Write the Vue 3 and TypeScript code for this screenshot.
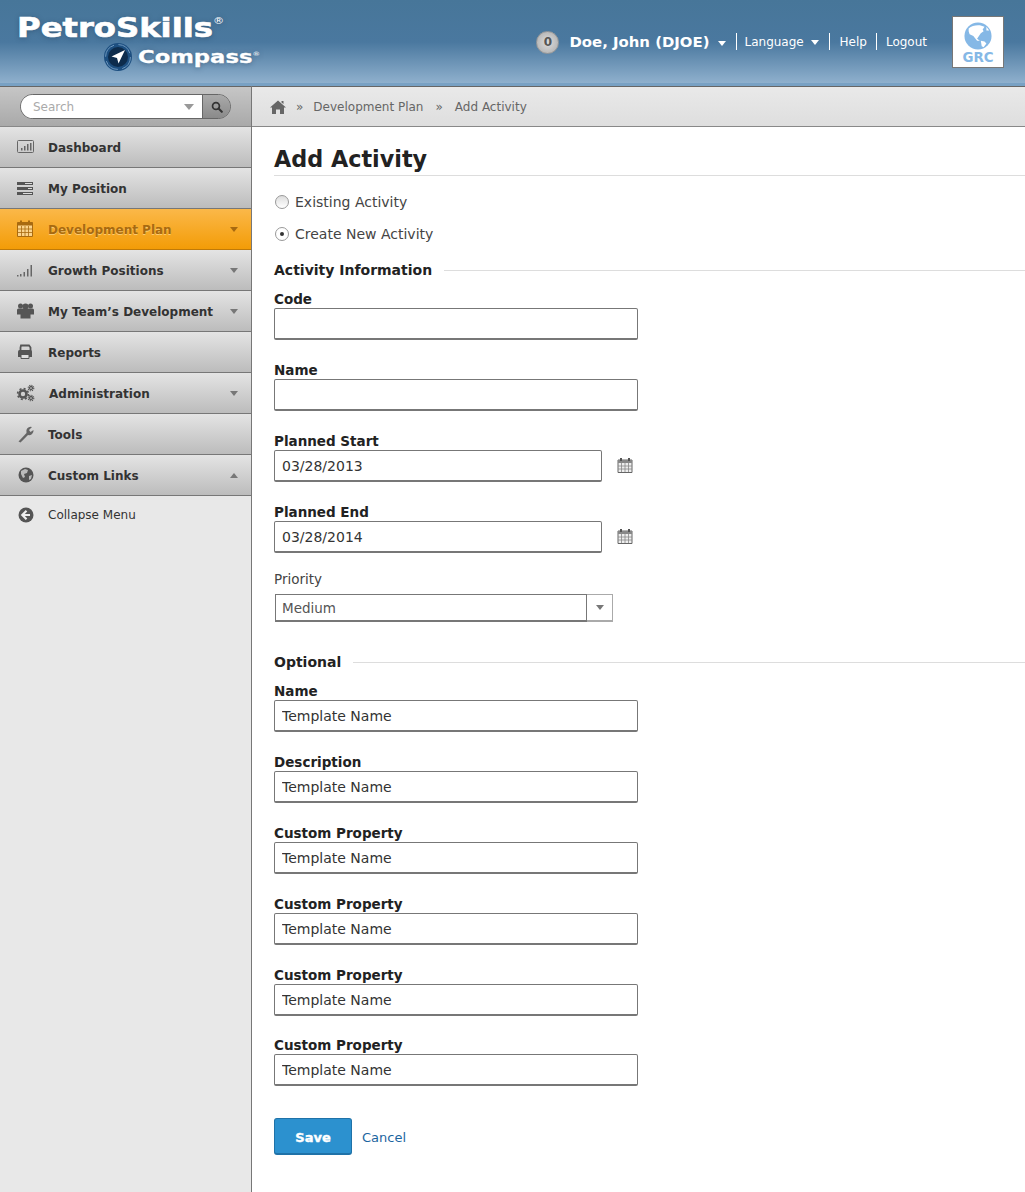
<template>
  <div class="page">
    <header class="topbar">
      <div class="logo">
        <div class="logo-main">PetroSkills<sup>®</sup></div>
        <div class="logo-sub">
          <svg class="compass" viewBox="0 0 30 30" width="30" height="30">
            <circle cx="15" cy="15" r="14" fill="#1d4f80" />
            <circle cx="15" cy="15" r="12.4" fill="none" stroke="#6d97bd" stroke-width="1" stroke-dasharray="15 4.5" />
            <circle cx="15" cy="15" r="10" fill="#0d2c4c" />
            <path d="M22 8 L8.5 14.5 L14 16 L15.5 21.5 Z" fill="#fff" />
          </svg>
          <span class="logo-sub-text">Compass<sup>®</sup></span>
        </div>
      </div>
      <div class="user-area">
        <span class="badge">0</span>
        <span class="user-name">Doe, John (DJOE)</span>
        <i class="caret white user-caret"></i>
        <span class="top-link sep lang">Language <i class="caret white"></i></span>
        <span class="top-link sep help">Help</span>
        <span class="top-link sep last">Logout</span>
        <div class="grc">
          <svg viewBox="0 0 30 30" width="28" height="28">
            <circle cx="15" cy="15" r="14.5" fill="#85b8e6" />
            <path d="M5 7 C8 4 13 3 17 3.500 L22 5 L20 8 L21 10 L18 12 L16 15 L14 18 L17 20 L14 20 L10 15 L6 13 L5 10 Z M18 20 L22 21 L24 23 L21 27 L19 26 Z M24 5 L27 9 L24 9 Z" fill="#fff" />
          </svg>
          <span>GRC</span>
        </div>
      </div>
    </header>

    <div class="main">
      <aside class="sidebar">
        <div class="search-bar">
          <div class="search">
            <div class="search-input">
              <span>Search</span>
              <i class="caret grey big"></i>
            </div>
            <div class="search-btn">
              <svg viewBox="0 0 14 14" width="12" height="12">
                <circle cx="5.8" cy="5.8" r="4" fill="none" stroke="#333" stroke-width="2" />
                <path d="M8.8 8.8 L12.6 12.6" stroke="#333" stroke-width="2.4" stroke-linecap="round" />
              </svg>
            </div>
          </div>
        </div>
        <nav>
          <div v-for="item in navItems" :key="item.label" :class="['nav-item', { active: item.active }]">
            <svg class="nav-icon" viewBox="0 0 20 20" width="20" height="20" v-html="item.icon"></svg>
            <span class="nav-label" :class="{ shifted: item.label === 'Administration' }">{{ item.label }}</span>
            <i v-if="item.caret" :class="['caret', 'nav-caret', item.caret]"></i>
          </div>
        </nav>
        <div class="collapse">
          <svg class="nav-icon" viewBox="0 0 20 20" width="20" height="20">
            <circle cx="10" cy="10" r="7.5" fill="#555" />
            <path d="M10.5 5.8 L6.3 10 L10.5 14.2 M6.8 10 H14" fill="none" stroke="#eee" stroke-width="2.2" />
          </svg>
          <span>Collapse Menu</span>
        </div>
      </aside>

      <div class="content">
        <div class="breadcrumb">
          <svg viewBox="0 0 16 14" width="16" height="14">
            <path d="M8 0.5 L16 7.5 L14 7.5 L14 14 L10 14 L10 9.5 L6 9.5 L6 14 L2 14 L2 7.5 L0 7.5 Z M11.5 1 H13.5 V4 L11.5 2.5 Z" fill="#666" />
          </svg>
          <span class="crumb-sep first">»</span>
          <span>Development Plan</span>
          <span class="crumb-sep">»</span>
          <span>Add Activity</span>
        </div>

        <form class="form" @submit.prevent>
          <h1>Add Activity</h1>

          <label class="radio-row">
            <span class="radio"></span>
            Existing Activity
          </label>
          <label class="radio-row">
            <span class="radio checked"></span>
            Create New Activity
          </label>

          <div class="section-title"><span>Activity Information</span></div>

          <div class="field">
            <label>Code</label>
            <input type="text" />
          </div>
          <div class="field">
            <label>Name</label>
            <input type="text" />
          </div>
          <div class="field" v-for="d in dates" :key="d.label">
            <label>{{ d.label }}</label>
            <div class="date-row">
              <input class="date" type="text" :value="d.value" />
              <svg class="cal" viewBox="0 0 16 16" width="16" height="16">
                <path d="M1 3 H15 V15.5 H1 Z" fill="#eee" stroke="#666" />
                <path d="M1 3 H15 V6 H1 Z" fill="#888" />
                <path d="M4 1 V4 M12 1 V4" stroke="#555" stroke-width="2" />
                <path d="M4.5 6 V15 M8 6 V15 M11.500 6 V15 M1 9 H15 M1 12 H15" stroke="#888" stroke-width="0.8" />
              </svg>
            </div>
          </div>

          <div class="field priority">
            <label>Priority</label>
            <div class="select">
              <span class="select-value">Medium</span>
              <span class="select-btn"><i class="caret grey"></i></span>
            </div>
          </div>

          <div class="section-title optional"><span>Optional</span></div>

          <div class="field" v-for="(label, i) in optional" :key="i">
            <label>{{ label }}</label>
            <input type="text" value="Template Name" />
          </div>

          <div class="actions">
            <button type="submit" class="save">Save</button>
            <a class="cancel">Cancel</a>
          </div>
        </form>
      </div>
    </div>
  </div>
</template>

<script setup lang="ts">
const barGrey = 'fill="#666"'

const navItems: { label: string; icon: string; caret?: string; active?: boolean }[] = [
  {
    label: 'Dashboard',
    icon: '<rect x="1.500" y="3.500" width="16" height="12" rx="1" fill="none" stroke="#666"/><path d="M5 11h1.500v2.500H5zM8 9h1.500v4.500H8zM11 7h1.500v6.500H11zM14 6h1.500v7.500H14z" ' + barGrey + '/>',
  },
  {
    label: 'My Position',
    icon: '<path d="M1 4h16v3H1zM1 9h16v3H1zM1 14h16v3H1z" fill="#555"/><path d="M9 5h7v1H9zM12 10h4v1h-4zM7 15h9v1H7z" fill="#ddd"/>',
  },
  {
    label: 'Development Plan',
    active: true,
    caret: 'brown',
    icon: '<path d="M1.500 3.500h15v14h-15z" fill="#fbd48c" stroke="#a86a10"/><path d="M1.500 3.500h15v3h-15z" fill="#a86a10"/><path d="M5 1.500v3M13 1.500v3" stroke="#a86a10" stroke-width="2"/><path d="M5.500 7v10M9 7v10M12.500 7v10M2 10h14M2 13.500h14" stroke="#a86a10" stroke-width="0.8"/>',
  },
  {
    label: 'Growth Positions',
    caret: 'grey',
    icon: '<path d="M1 15h1.500v1.500H1zM4 14h1.500v2.500H4zM7.500 12H9v4.500H7.500zM11 9h1.500v7.500H11zM14.500 5H16v11.500h-1.500z" ' + barGrey + '/>',
  },
  {
    label: 'My Team’s Development',
    caret: 'grey',
    icon: '<circle cx="4.500" cy="5" r="2.500" fill="#555"/><circle cx="14.500" cy="5" r="2.500" fill="#555"/><circle cx="9.500" cy="5.500" r="3" fill="#555"/><path d="M1 9q0-1.500 1.500-1.500h14q1.500 0 1.500 1.500v4.500H1z" fill="#555"/><path d="M4.500 11q0-2 2-2h6q2 0 2 2v6.500h-10z" fill="#555"/>',
  },
  {
    label: 'Reports',
    icon: '<path d="M5 3.500h8l1.500 2V9h-10V5.500z" fill="none" stroke="#555" stroke-width="1.800"/><path d="M2 9.500q0-1.500 1.500-1.500h11q1.500 0 1.500 1.500V15H2z" fill="#555"/><path d="M5 12.500h8v4H5z" fill="#ddd" stroke="#555"/>',
  },
  {
    label: 'Administration',
    caret: 'grey',
    icon: '<circle cx="7" cy="11" r="3.500" fill="none" stroke="#555" stroke-width="2.600"/><circle cx="7" cy="11" r="5.400" fill="none" stroke="#555" stroke-width="1.600" stroke-dasharray="2 2.240"/><circle cx="15" cy="5" r="1.500" fill="none" stroke="#555" stroke-width="1.300"/><circle cx="15" cy="5" r="2.800" fill="none" stroke="#555" stroke-width="1.100" stroke-dasharray="1.200 1.000"/><circle cx="15" cy="15" r="1.500" fill="none" stroke="#555" stroke-width="1.300"/><circle cx="15" cy="15" r="2.800" fill="none" stroke="#555" stroke-width="1.100" stroke-dasharray="1.200 1.000"/>',
  },
  {
    label: 'Tools',
    icon: '<path d="M2.500 17.500 L10.500 9 A4.500 4.500 0 0 1 16 3 L13 6 L14.500 8 L17.500 6 A4.500 4.500 0 0 1 12 11 L4.500 18.500 Z" fill="#666"/>',
  },
  {
    label: 'Custom Links',
    caret: 'grey up',
    icon: '<circle cx="10" cy="10" r="7.500" fill="#555"/><path d="M5 6l4-2 3 1-1 3-3 1 1 3-2 1-2-4zM13 11l3-1-1 4-2 1z" fill="#bbb"/>',
  },
]

const dates = [
  { label: 'Planned Start', value: '03/28/2013' },
  { label: 'Planned End', value: '03/28/2014' },
]

const optional = ['Name', 'Description', 'Custom Property', 'Custom Property', 'Custom Property', 'Custom Property']
</script>

<style>
html,
body {
  margin: 0;
  background: #fff;
}
</style>

<style scoped>
.page {
  width: 1025px;
  height: 1192px;
  overflow: hidden;
  font-family: "DejaVu Sans", Verdana, sans-serif;
  font-size: 13px;
  color: #333;
  display: flex;
  flex-direction: column;
}
.topbar {
  height: 86px;
  flex: none;
  box-sizing: border-box;
  border-bottom: 3px solid #78a1c4;
  background: linear-gradient(#477699 0, #4a789f 42px, #8fb0cd 83px);
  display: flex;
  justify-content: space-between;
}
.logo {
  padding: 13px 0 0 17px;
  color: #fff;
  font-family: "DejaVu Sans", Verdana, sans-serif;
  font-weight: 700;
  text-shadow: 0 1px 5px rgba(30, 60, 90, 0.5);
}
.logo-main {
  font-size: 26px;
  line-height: 30px;
  white-space: nowrap;
  transform: scaleX(1.24);
  transform-origin: left;
  -webkit-text-stroke: 0.6px #fff;
}
.logo sup {
  font-size: 9px;
  font-weight: 400;
  vertical-align: 13px;
  line-height: 0;
  -webkit-text-stroke: 0;
}
.logo-sub {
  display: flex;
  align-items: center;
  gap: 5px;
  margin: -1px 0 0 86px;
  line-height: 30px;
}
.logo-sub-text {
  font-size: 18px;
  transform: scaleX(1.26);
  transform-origin: left;
  -webkit-text-stroke: 0.3px #fff;
  white-space: nowrap;
}
.logo-sub sup {
  font-size: 6px;
  vertical-align: 7px;
}
.compass {
  flex: none;
}
.user-area {
  display: flex;
  align-items: flex-start;
  color: #fff;
  padding: 16px 21px 0 0;
}
.badge {
  width: 23px;
  height: 23px;
  margin: 15px 10px 0 0;
  border-radius: 50%;
  background: radial-gradient(#ddd, #aaa);
  border: 1px solid #999;
  box-sizing: border-box;
  color: #555;
  font-size: 12px;
  font-weight: 700;
  text-align: center;
  line-height: 21px;
}
.user-name {
  margin-top: 16px;
  font-size: 14.900px;
  font-weight: 700;
  line-height: 20px;
}
.user-caret {
  margin: 25px 10px 0 8px;
}
.top-link {
  margin-top: 17px;
  height: 17px;
  line-height: 19px;
  font-size: 12px;
}
.sep {
  border-left: 1px solid #fff;
}
.lang {
  padding: 0 10px 0 8px;
}
.help {
  padding: 0 9px 0 10px;
}
.sep .caret {
  margin: 0 0 1px 3px;
  vertical-align: middle;
}
.last {
  padding: 0 25px 0 9px;
}
.grc {
  width: 52px;
  height: 52px;
  box-sizing: border-box;
  border: 1px solid #777;
  background: #fff;
  color: #85b8e6;
  font-size: 13.400px;
  font-weight: 700;
  line-height: 14px;
  text-align: center;
  padding-top: 5px;
}
.grc svg {
  display: block;
  margin: 0 auto 1px;
}
.main {
  flex: 1;
  display: flex;
  min-height: 0;
}
.caret {
  display: inline-block;
  width: 0;
  height: 0;
  border-left: 4px solid transparent;
  border-right: 4px solid transparent;
  border-top: 5px solid #888;
}
.caret.white {
  border-top-color: #fff;
}
.caret.grey {
  border-top-color: #777;
}
.caret.big {
  border-left-width: 5px;
  border-right-width: 5px;
  border-top-width: 6px;
  border-top-color: #999;
}
.caret.brown {
  border-top-color: #a86a10;
}
.caret.up {
  border-top: 0;
  border-bottom: 5px solid #777;
}
.sidebar {
  width: 252px;
  flex: none;
  box-sizing: border-box;
  background: #e8e8e8;
  border-right: 1px solid #777;
}
.search-bar {
  height: 41px;
  box-sizing: border-box;
  border-top: 1px solid #666;
  border-bottom: 1px solid #888;
  background: linear-gradient(#c6c6c6, #a9a9a9);
  padding: 7px 0 0 20px;
}
.search {
  width: 211px;
  height: 25px;
  display: flex;
  box-sizing: border-box;
  border: 1px solid #666;
  border-radius: 13px;
  overflow: hidden;
}
.search-input {
  flex: 1;
  background: #fff;
  color: #aaa;
  font-size: 12px;
  line-height: 23px;
  padding: 1px 8px 0 12px;
  display: flex;
  align-items: center;
  justify-content: space-between;
}
.search-btn {
  width: 27px;
  border-left: 1px solid #666;
  background: linear-gradient(#aaa, #8a8a8a);
  display: flex;
  align-items: center;
  justify-content: center;
}
.nav-item {
  height: 41px;
  box-sizing: border-box;
  border-bottom: 1px solid #777;
  background: linear-gradient(#e4e4e4, #bcbcbc);
  display: flex;
  align-items: center;
  padding: 0 13px 0 16px;
  font-size: 12px;
  font-weight: 700;
  color: #333;
  white-space: nowrap;
}
.nav-item.active {
  background: linear-gradient(#fbb849, #f39c07);
  border-bottom-color: #c07a08;
  color: #a86a10;
  text-shadow: 0 1px 0 rgba(255, 230, 170, 0.6);
}
.nav-icon {
  flex: none;
  margin-right: 12px;
}
.nav-label {
  padding-top: 2px;
}
.nav-label.shifted {
  margin-left: 1px;
}
.nav-caret {
  margin-left: auto;
}
.collapse {
  height: 38px;
  display: flex;
  align-items: center;
  padding-left: 16px;
  font-size: 12px;
  color: #333;
}
.content {
  flex: 1;
  min-width: 0;
}
.breadcrumb {
  height: 41px;
  box-sizing: border-box;
  border-top: 1px solid #666;
  border-bottom: 1px solid #888;
  background: linear-gradient(#e9e9e9, #dedede);
  display: flex;
  align-items: center;
  padding-left: 18px;
  color: #666;
  font-size: 12px;
}
.crumb-sep {
  margin: 0 12px 0 12px;
}
.crumb-sep.first {
  margin: 0 10px 0 10px;
}
.form {
  padding: 18px 0 0 22px;
}
h1 {
  margin: 0 0 15px;
  font-size: 22.300px;
  line-height: 28px;
  font-weight: 700;
  color: #222;
  border-bottom: 1px solid #ddd;
  height: 30px;
}
.radio-row {
  display: flex;
  align-items: center;
  gap: 6px;
  height: 22px;
  margin-bottom: 10px;
  font-size: 14px;
  color: #444;
}
.radio {
  width: 14px;
  height: 14px;
  margin-left: 1px;
  box-sizing: border-box;
  border: 1px solid #999;
  border-radius: 50%;
  background: linear-gradient(#ddd, #fff);
  flex: none;
  display: flex;
  align-items: center;
  justify-content: center;
}
.radio.checked {
  background: #fff;
}
.radio.checked::after {
  content: "";
  width: 4px;
  height: 4px;
  border-radius: 50%;
  background: #333;
}
.section-title {
  display: flex;
  align-items: center;
  gap: 12px;
  height: 20px;
  margin: 15px 0 10px;
  font-size: 14px;
  font-weight: 700;
  color: #222;
}
.section-title::after {
  content: "";
  flex: 1;
  height: 1px;
  background: #ddd;
}
.section-title.optional {
  margin-top: 30px;
}
.field {
  height: 71px;
}
.field:nth-last-child(2) {
  margin-top: -1px;
}
.field label {
  display: block;
  height: 18px;
  line-height: 18px;
  font-size: 13.500px;
  font-weight: 700;
  color: #222;
}
input {
  display: block;
  width: 364px;
  height: 32px;
  box-sizing: border-box;
  border: 1px solid #777;
  border-bottom-width: 2px;
  border-radius: 2px;
  padding: 0 7px;
  font: 14px "DejaVu Sans", Verdana, sans-serif;
  color: #333;
  outline: none;
}
.date-row {
  display: flex;
  align-items: center;
  gap: 15px;
}
input.date {
  width: 328px;
}
.cal {
  margin-top: -2px;
}
.priority {
  height: 51px;
  margin-top: -3px;
}
.priority label {
  font-weight: 400;
  color: #444;
  height: 23px;
  line-height: 17px;
  font-size: 13.500px;
}
.select {
  width: 338px;
  height: 28px;
  display: flex;
  box-sizing: border-box;
  margin-left: 1px;
  font-size: 13.500px;
  color: #555;
}
.select-value {
  flex: 1;
  box-sizing: border-box;
  border: 1px solid #777;
  border-bottom-width: 2px;
  line-height: 27px;
  padding-left: 6px;
}
.select-btn {
  width: 26px;
  box-sizing: border-box;
  border: 1px solid #aaa;
  border-left: 0;
  border-bottom-width: 2px;
  display: flex;
  align-items: center;
  justify-content: center;
}
.actions {
  display: flex;
  align-items: center;
  gap: 10px;
  margin-top: 11px;
}
.save {
  width: 78px;
  height: 37px;
  box-sizing: border-box;
  padding: 2px 0 0;
  background: #2c91cf;
  border: 1px solid #1f72a8;
  border-bottom-width: 2px;
  border-radius: 3px;
  color: #fff;
  font: 700 13px "DejaVu Sans", Verdana, sans-serif;
  -webkit-text-stroke: 0.4px #fff;
}
.cancel {
  color: #1c659f;
  font-size: 13px;
  margin-top: 2px;
}
</style>
